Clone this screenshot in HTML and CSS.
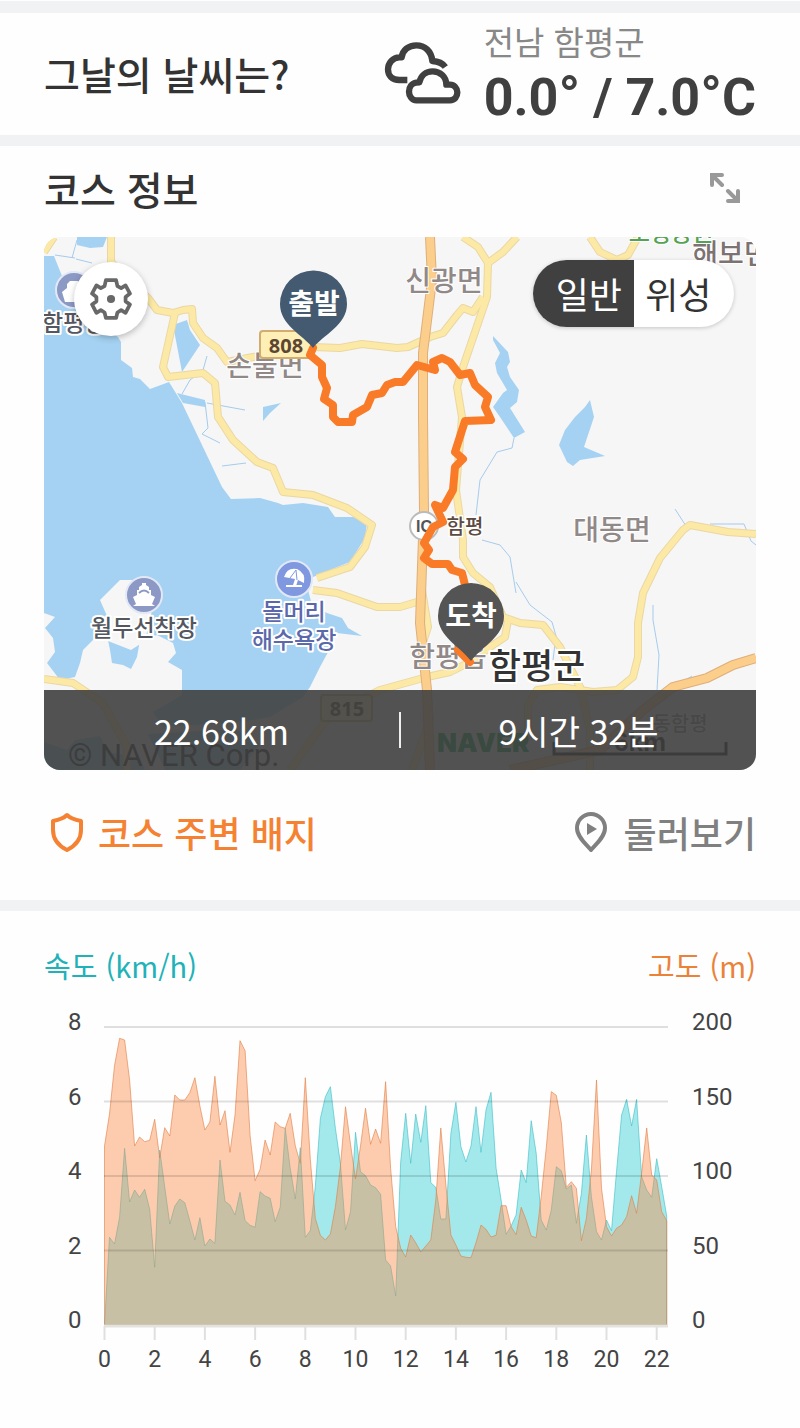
FILE: index.html
```html
<!DOCTYPE html>
<html lang="ko">
<head>
<meta charset="utf-8">
<meta name="viewport" content="width=device-width, initial-scale=1">
<title>코스 정보</title>
<link rel="stylesheet" href="styles.css">
</head>
<body>
<main class="page">
  <section class="weather">
    <h2 class="title">그날의 날씨는?</h2>
    <svg class="cloud" viewBox="42 122 234 198" aria-hidden="true">
      <path d="M112 242H88C66 242 54 228 54 210S68 174 88 174H95C98 152 116 138 139 138C164 138 184 155 187 185C205 186 218 192 226 203"/>
      <path d="M139 303H240C254 303 262 292 262 279S252 256 240 256L229 256C229 232 210 216 188 216C168 216 152 229 148 249L139 250C125 252 117 264 117 277S126 303 139 303Z"/>
    </svg>
    <div class="reading">
      <p class="place">전남 함평군</p>
      <p class="temp">0.0<span class="degree">°</span> / 7.0<span class="degree">°</span>C</p>
    </div>
  </section>

  <section class="course">
    <header class="course-head">
      <h2 class="title">코스 정보</h2>
      <button class="expand" type="button" aria-label="지도 확대">
        <svg viewBox="0 0 30 30" aria-hidden="true"><path d="M12 2H2V12M2 2L12 12M28 18V28H18M28 28L18 18"/></svg>
      </button>
    </header>

    <div class="map">
      <svg class="map-canvas" viewBox="44 237 712 533" role="img" aria-label="코스 지도">
        <rect class="land" x="44" y="237" width="712" height="533"/>
        <path class="water" d="M44 256H54L62 276L100 325L118 337L121 342V360L132 368L133 377L140 379L150 389L169 382L182 403L222 487L231 499L260 498L278 503L283 505L303 503L328 507L335 517L353 517L367 523L365 538L350 562L325 572L313 577L308 590L312 605L327 613L342 618L348 628L362 636L337 633L333 643L320 667L310 687L303 697L270 717L240 722L163 727L153 712L182 695V670L168 662L176 653L173 643L157 635L140 640L137 657L131 669L123 665L112 663L110 650L108 640L100 633L83 650L80 663L75 677L60 680L47 663L55 652L53 638L45 628L55 617L44 613Z"/>
        <path class="land" d="M100 600L120 580H140L152 610L145 641L131 650L108 641L98 635L107 616Z"/>
        <path class="water" d="M173 325L187 320L190 330L200 345L182 372ZM77 237H107L103 247L90 248L77 245ZM177 393L205 400V407L183 403ZM263 407L281 403L270 413L263 421ZM493 336L508 352L510 362L507 367L510 377L519 390L517 402L510 408L525 432L514 438L500 417L493 407L503 393L507 390L497 373L495 363L500 353L493 340ZM590 400L594 417L584 447L605 456L580 460L573 466L567 462L559 445L565 430L575 417L585 407ZM44 742L67 750L75 740L100 736L108 752L140 758L145 770H44ZM148 734L235 729L260 744L240 770H165Z"/>
        <path class="stream" d="M55 255L75 258M77 240L72 258M76 259L92 263M182 394L190 380L203 370L207 356M205 402L208 428L202 434L220 443M222 466L246 463M207 403L245 410M514 438L512 448L497 452L480 480L476 515M482 540L500 545L510 557L516 593M516 582L530 605L552 622L556 636L553 660M675 509L686 526M710 524H744L751 541L756 545M653 605V620L659 655L657 690M676 686L692 676"/>
        <g class="road-edge">
          <path d="M44 252L54 237M111 237V262L148 298L157 310L173 313L183 310L192 309L193 323L203 338L217 348L227 362L253 357L313 347L340 348L362 344L397 348L408 347L430 337L443 333L457 315L463 308L473 312L483 297"/>
          <path d="M175 313L163 367L168 377L203 373L215 383L218 417L233 440L257 462L273 468L283 492L313 495L347 508L372 525L365 547L350 567L317 578M313 590L337 593L377 607L400 607L417 602"/>
          <path d="M463 237L478 247L488 263L487 297L463 367L457 387L462 417L456 490L463 540V557L473 573L490 587L503 617L520 623L543 625L560 647L580 687L590 730V770M517 237L503 252L488 263M590 237L600 252L617 260L628 255L638 237"/>
          <path d="M756 534L728 532L690 525L683 530L660 558L643 593L638 623V657L633 677L617 690L593 692L560 687L537 690L528 705V740M508 620L505 637L490 647L470 662L450 672L427 677L380 690L330 715L290 770M44 679L73 683L103 703L127 747V770M422 590L428 627L422 645M427 685L430 720L412 770"/>
        </g>
        <g class="road">
          <path d="M44 252L54 237M111 237V262L148 298L157 310L173 313L183 310L192 309L193 323L203 338L217 348L227 362L253 357L313 347L340 348L362 344L397 348L408 347L430 337L443 333L457 315L463 308L473 312L483 297"/>
          <path d="M175 313L163 367L168 377L203 373L215 383L218 417L233 440L257 462L273 468L283 492L313 495L347 508L372 525L365 547L350 567L317 578M313 590L337 593L377 607L400 607L417 602"/>
          <path d="M463 237L478 247L488 263L487 297L463 367L457 387L462 417L456 490L463 540V557L473 573L490 587L503 617L520 623L543 625L560 647L580 687L590 730V770M517 237L503 252L488 263M590 237L600 252L617 260L628 255L638 237"/>
          <path d="M756 534L728 532L690 525L683 530L660 558L643 593L638 623V657L633 677L617 690L593 692L560 687L537 690L528 705V740M508 620L505 637L490 647L470 662L450 672L427 677L380 690L330 715L290 770M44 679L73 683L103 703L127 747V770M422 590L428 627L422 645M427 685L430 720L412 770"/>
        </g>
        <g class="highway-edge"><path d="M430 237L432 280L423 353V417L424 510L420 623L427 690L430 770M756 658L733 665L707 678L673 687L643 710L600 750L510 770"/></g>
        <g class="highway"><path d="M430 237L432 280L423 353V417L424 510L420 623L427 690L430 770M756 658L733 665L707 678L673 687L643 710L600 750L510 770"/></g>

        <g class="label">
          <text class="town" x="444" y="291">신광면</text>
          <text class="town" x="265" y="376">손불면</text>
          <text class="town" x="612" y="540">대동면</text>
          <text class="town" x="448" y="667">함평읍</text>
          <text class="town district" x="731" y="264">해보면</text>
          <text class="town park" x="671" y="241">모평공원</text>
          <text class="town minor" x="680" y="731">동함평</text>
          <text class="city" x="537" y="679">함평군</text>
          <text class="place-name" x="42" y="331" text-anchor="start">함평항</text>
          <text class="place-name" x="144" y="636">월두선착장</text>
          <text class="place-name beach" x="294" y="620">돌머리</text>
          <text class="place-name beach" x="294" y="648">해수욕장</text>
        </g>

        <circle class="poi" cx="74" cy="290" r="18"/>
        <circle class="poi" cx="144" cy="595" r="18"/>
        <circle class="poi sand" cx="294" cy="579" r="18"/>
        <path class="glyph" d="M62 292L67 288V284L70 281H78L81 284V289L86 292L83 302H65ZM133 597L137 595V590H139V587L142 585V583H146V585L149 587V590H151V595L155 597L152 604L155 606H133L136 604Z"/>
        <path class="poi-line" d="M139 593Q144 588 149 593"/>
        <path class="glyph" d="M284 577Q287 567 297 569Q306 573 304 583L298 580L296 586L293 585L295 579ZM286 585H302V587H286Z"/>
        <path class="poi-line sandy" d="M290 578L296 570L297 580"/>

        <circle class="junction" cx="424" cy="526" r="14"/>
        <text class="junction-text" x="424" y="532">IC</text>
        <text class="junction-name" x="465" y="534">함평</text>
        <rect class="shield" x="260" y="331" width="54" height="27" rx="3"/>
        <text class="shield-text" x="286" y="353">808</text>
        <rect class="shield" x="321" y="695" width="51" height="26" rx="3"/>
        <text class="shield-text" x="347" y="716">815</text>
        <text class="naver" x="437" y="752">NAVER</text>
        <text class="copyright" x="68" y="766">© NAVER Corp.</text>
        <text class="scale-text" x="640" y="751">6km</text>
        <path class="scale" d="M554 742V754H726V742"/>

        <path class="route" d="M313 348L310 355L322 365V377L327 388L324 399L333 405V417L338 422H352L353 415L367 407L372 395L382 393L387 385L395 382H403L417 365L435 370L433 362L442 358L450 362L460 375L470 373L475 385L488 397L485 407L491 420L465 421L455 452L463 459L455 467L453 490L443 508L435 505L443 522L433 527L424 543L429 550L424 558L432 564H448L452 570L462 573L465 585M458 650L470 662"/>
        <path class="pin start" d="M313 348C303 335 280 325 280 304A33 33 0 0 1 347 304C347 325 323 335 313 348Z"/>
        <text class="pin-text" x="314" y="314">출발</text>
        <path class="pin end" d="M471 661C461 647 438 637 438 616A33 33 0 0 1 504 616C504 637 481 647 471 661Z"/>
        <text class="pin-text" x="471" y="626">도착</text>
      </svg>

      <button class="settings" type="button" aria-label="지도 설정">
        <svg viewBox="151 144 124 124" aria-hidden="true">
          <path d="M198 150H228L232 168L243 174L256 166L269 190L256 200V213L269 222L256 247L243 239L232 246L228 262H198L194 246L183 239L170 247L157 222L170 213V200L157 190L170 166L183 174L194 168Z"/>
          <circle cx="213" cy="206" r="12"/>
        </svg>
      </button>
      <div class="map-type" role="group" aria-label="지도 종류">
        <button class="type on" type="button" aria-pressed="true">일반</button>
        <button class="type" type="button" aria-pressed="false">위성</button>
      </div>
      <div class="summary">
        <span>22.68km</span>
        <i class="divider"></i>
        <span>9시간 32분</span>
      </div>
    </div>

    <nav class="links">
      <a class="link accent" href="#badges">
        <svg viewBox="0 0 34 40" aria-hidden="true"><path d="M17 3C13 7 8 8 3 9V18C3 27 9 34 17 38C25 34 31 27 31 18V9C26 8 21 7 17 3Z"/></svg>
        코스 주변 배지
      </a>
      <a class="link" href="#explore">
        <svg viewBox="0 0 34 40" aria-hidden="true"><path d="M17 38C12 32 3 25 3 16A14 14 0 0 1 31 16C31 25 22 32 17 38Z"/><path class="play" d="M13 11L23 17L13 23Z"/></svg>
        둘러보기
      </a>
    </nav>
  </section>

  <section class="stats">
    <div class="legend">
      <span class="speed-name">속도 (km/h)</span>
      <span class="height-name">고도 (m)</span>
    </div>
    <svg class="chart" viewBox="0 0 712 400" role="img" aria-label="속도와 고도 그래프">
      <path id="speed" class="speed"/>
      <path id="height" class="height"/>
      <g id="grid"></g>
      <path class="baseline" d="M60 326H624"/>
      <g id="labels"></g>
    </svg>
  </section>
</main>
<script src="chart.js"></script>
</body>
</html>
```
FILE: styles.css
```css
* { box-sizing: border-box; }

body {
  margin: 0;
  background: #fefefe;
  color: #333;
  font-family: "Noto Sans CJK KR", "Noto Sans", sans-serif;
}

h2, p { margin: 0; }

button {
  padding: 0;
  border: 0;
  background: none;
  color: inherit;
  font: inherit;
  cursor: pointer;
}

svg { display: block; }

.page { padding-top: 1px; }

.weather, .course, .stats { padding: 0 44px; }

.title {
  font-size: 39px;
  font-weight: 500;
  line-height: 56px;
}

.weather {
  display: flex;
  align-items: center;
  height: 134px;
  padding-bottom: 2px;
  border-top: 12px solid #f0f2f4;
}

.cloud {
  width: 78px;
  height: 66px;
  margin-left: auto;
  margin-right: 22px;
  fill: none;
  stroke: #404040;
  stroke-width: 19;
  stroke-linejoin: round;
}

.reading { white-space: nowrap; }

.place {
  color: #888;
  font-size: 33px;
  font-weight: 400;
  line-height: 50px;
}

.temp {
  color: #404040;
  font-family: Roboto, sans-serif;
  font-size: 52px;
  font-weight: 700;
  line-height: 64px;
}

.degree { font-size: 56px; line-height: 1; }

.course { border-top: 11px solid #f0f2f4; }

.course-head {
  display: flex;
  align-items: center;
  justify-content: space-between;
  height: 91px;
  padding-bottom: 8px;
}

.expand { margin-right: 16px; }

.expand svg {
  width: 30px;
  height: 30px;
  fill: none;
  stroke: #999;
  stroke-width: 4;
  stroke-linecap: round;
}

.map {
  position: relative;
  overflow: hidden;
  border-radius: 16px;
}

.map-canvas { width: 100%; height: auto; }

.land { fill: #f6f6f6; }
.water { fill: #a5d2f2; }
.stream { fill: none; stroke: #a5cbed; stroke-width: 1; }

.road-edge, .road, .highway-edge, .highway {
  fill: none;
  stroke-linejoin: round;
}
.road-edge { stroke: #ead7a4; stroke-width: 8; }
.road { stroke: #fce9a6; stroke-width: 6; }
.highway-edge { stroke: #dfae7b; stroke-width: 10; }
.highway { stroke: #fbce8b; stroke-width: 8; }

.label {
  text-anchor: middle;
  paint-order: stroke;
  stroke: #fff;
  stroke-width: 4;
  stroke-linejoin: round;
}
.town { fill: #918888; font-size: 28px; font-weight: 500; stroke-width: 2; }
.park { fill: #55a352; font-size: 23px; }
.minor { font-size: 20px; }
.district { fill: #7c7272; }
.city { fill: #333; font-size: 35px; font-weight: 500; }
.place-name { fill: #555760; font-size: 23px; font-weight: 500; }
.beach { fill: #5b68ab; }

.poi { fill: #8d99c5; stroke: #e2e8f6; stroke-width: 2; }
.sand { fill: #7f98df; }
.glyph { fill: #fff; }
.poi-line { fill: none; stroke: #8d99c5; stroke-width: 2; }
.sandy { stroke: #7f98df; stroke-width: 1; }

.junction { fill: #fff; stroke: #bbb; stroke-width: 2; }
.junction-text {
  fill: #555;
  font: 700 16px "Liberation Sans", sans-serif;
  text-anchor: middle;
}
.junction-name {
  fill: #5c4a42;
  stroke: #fff;
  stroke-width: 3;
  paint-order: stroke;
  font-size: 20px;
  font-weight: 500;
  text-anchor: middle;
}
.shield { fill: #fdefb5; stroke: #d3ad70; stroke-width: 2; }
.shield-text {
  fill: #5c4632;
  font-family: "Noto Sans", sans-serif;
  font-size: 20px;
  font-weight: 700;
  text-anchor: middle;
}
.naver { fill: #00a04a; font: 900 26px Inter, sans-serif; }
.copyright { fill: #222; font: 31px Roboto, sans-serif; }
.scale-text { fill: #111; font: 700 26px "Liberation Sans", sans-serif; text-anchor: middle; }
.scale { fill: none; stroke: #111; stroke-width: 3; }

.route {
  fill: none;
  stroke: #f97b27;
  stroke-width: 8;
  stroke-linecap: round;
  stroke-linejoin: round;
}
.start { fill: #445a70; }
.end { fill: #545454; }
.pin-text { fill: #fff; font-size: 28px; font-weight: 700; text-anchor: middle; }

.settings {
  position: absolute;
  top: 25px;
  left: 30px;
  display: grid;
  place-items: center;
  width: 74px;
  height: 74px;
  border-radius: 50%;
  background: #fff;
  box-shadow: 0 2px 6px rgb(0 0 0 / 25%);
}
.settings svg {
  width: 42px;
  height: 42px;
  fill: none;
  stroke: #686868;
  stroke-width: 11;
  stroke-linejoin: round;
}
.settings circle { fill: #686868; stroke: none; }

.map-type {
  position: absolute;
  top: 23px;
  right: 22px;
  display: flex;
  width: 201px;
  height: 67px;
  overflow: hidden;
  border-radius: 34px;
  background: #fff;
  box-shadow: 0 1px 4px rgb(0 0 0 / 20%);
}
.type { flex: 1; padding-right: 11px; font-size: 36px; line-height: 67px; }
.on { padding: 0 0 0 11px; background: #404040; color: #fff; }

.summary {
  position: absolute;
  right: 0;
  bottom: 0;
  left: 0;
  display: grid;
  grid-template-columns: 1fr 2px 1fr;
  align-items: center;
  justify-items: center;
  height: 80px;
  background: rgb(64 64 64 / 90%);
  color: #fff;
  font-size: 34px;
}
.divider { width: 2px; height: 36px; background: #eee; }

.links {
  display: flex;
  align-items: center;
  justify-content: space-between;
  height: 130px;
  padding-bottom: 6px;
}
.link {
  display: flex;
  align-items: center;
  gap: 16px;
  color: #808080;
  font-size: 36px;
  font-weight: 500;
  text-decoration: none;
}
.link svg {
  width: 34px;
  height: 40px;
  fill: none;
  stroke: currentColor;
  stroke-width: 4;
  stroke-linejoin: round;
}
.link .play { fill: currentColor; stroke: none; }
.accent { padding-left: 6px; color: #f58233; }
.accent svg { margin-right: -2px; }

.stats { border-top: 11px solid #f0f2f4; padding-bottom: 28px; }

.legend {
  display: flex;
  align-items: flex-end;
  justify-content: space-between;
  height: 89px;
  padding-bottom: 13px;
  font-size: 29px;
  line-height: 44px;
}
.speed-name { color: #20b2b8; }
.height-name { color: #ea8238; }

.chart { width: 100%; height: auto; }
.chart text { fill: #444; }
.side { font: 24px Roboto, sans-serif; }
.foot { font: 23px Roboto, sans-serif; text-anchor: middle; }
.grid-line { stroke: rgb(0 0 0 / 12%); stroke-width: 2; }
.speed { fill: rgb(72 211 215 / 50%); stroke: rgb(60 190 198 / 60%); stroke-width: 1; }
.height { fill: rgb(252 136 66 / 42%); stroke: rgb(225 125 65 / 60%); stroke-width: 1; }
.baseline { stroke: #e2e2de; stroke-width: 3; }
```
FILE: chart.js
```js
// One sample every 0.2 km; each number is a depth below the chart's top edge, in thirds of a unit.
const height = [438,342,197,115,120,240,438,411,425,421,358,474,383,408,285,300,300,278,233,318,390,366,229,375,332,457,345,122,152,407,542,508,420,465,366,380,385,340,438,490,233,478,655,706,720,702,620,500,320,433,537,438,325,433,387,430,245,505,680,745,771,705,728,756,738,720,600,384,555,705,735,768,772,773,728,675,688,711,706,617,617,680,704,622,660,708,713,590,442,275,286,368,562,545,565,722,655,510,240,565,680,708,685,675,650,587,640,520,384,525,540,635,662];
const speed = [975,712,732,652,445,606,570,592,568,628,802,450,560,672,618,597,608,662,720,653,738,717,730,480,604,615,645,577,662,676,682,575,588,595,665,622,385,505,597,443,712,692,560,355,290,260,385,490,690,635,397,515,527,555,563,583,780,798,888,485,340,490,342,427,317,548,562,657,657,400,307,440,486,438,320,457,330,277,505,600,703,678,645,510,548,362,460,660,690,630,500,512,567,555,670,580,405,590,695,720,660,692,515,345,298,378,298,530,570,592,476,560,648];

const left = 60.5;
const step = 5.02;
const base = 325;

function area(data) {
  const line = data.map((v, i) => `${(left + i * step).toFixed(1)} ${(v / 3).toFixed(1)}`);
  const right = left + (data.length - 1) * step;
  return `M${left} ${base}L${line.join("L")}L${right.toFixed(1)} ${base}Z`;
}

document.getElementById("speed").setAttribute("d", area(speed));
document.getElementById("height").setAttribute("d", area(height));

let grid = "";
let labels = "";
for (let i = 0; i < 5; i++) {
  const y = 27 + i * 74.5;
  if (i < 4) grid += `<path class="grid-line" d="M60 ${y}H624"/>`;
  labels += `<text class="side" x="24" y="${y + 3}">${8 - i * 2}</text>`;
  labels += `<text class="side" x="648" y="${y + 3}">${200 - i * 50}</text>`;
}
for (let km = 0; km <= 22; km += 2) {
  const x = left + km * 5 * step;
  grid += `<path class="grid-line" d="M${x} 326V340"/>`;
  labels += `<text class="foot" x="${x}" y="367">${km}</text>`;
}
document.getElementById("grid").innerHTML = grid;
document.getElementById("labels").innerHTML = labels;
```
